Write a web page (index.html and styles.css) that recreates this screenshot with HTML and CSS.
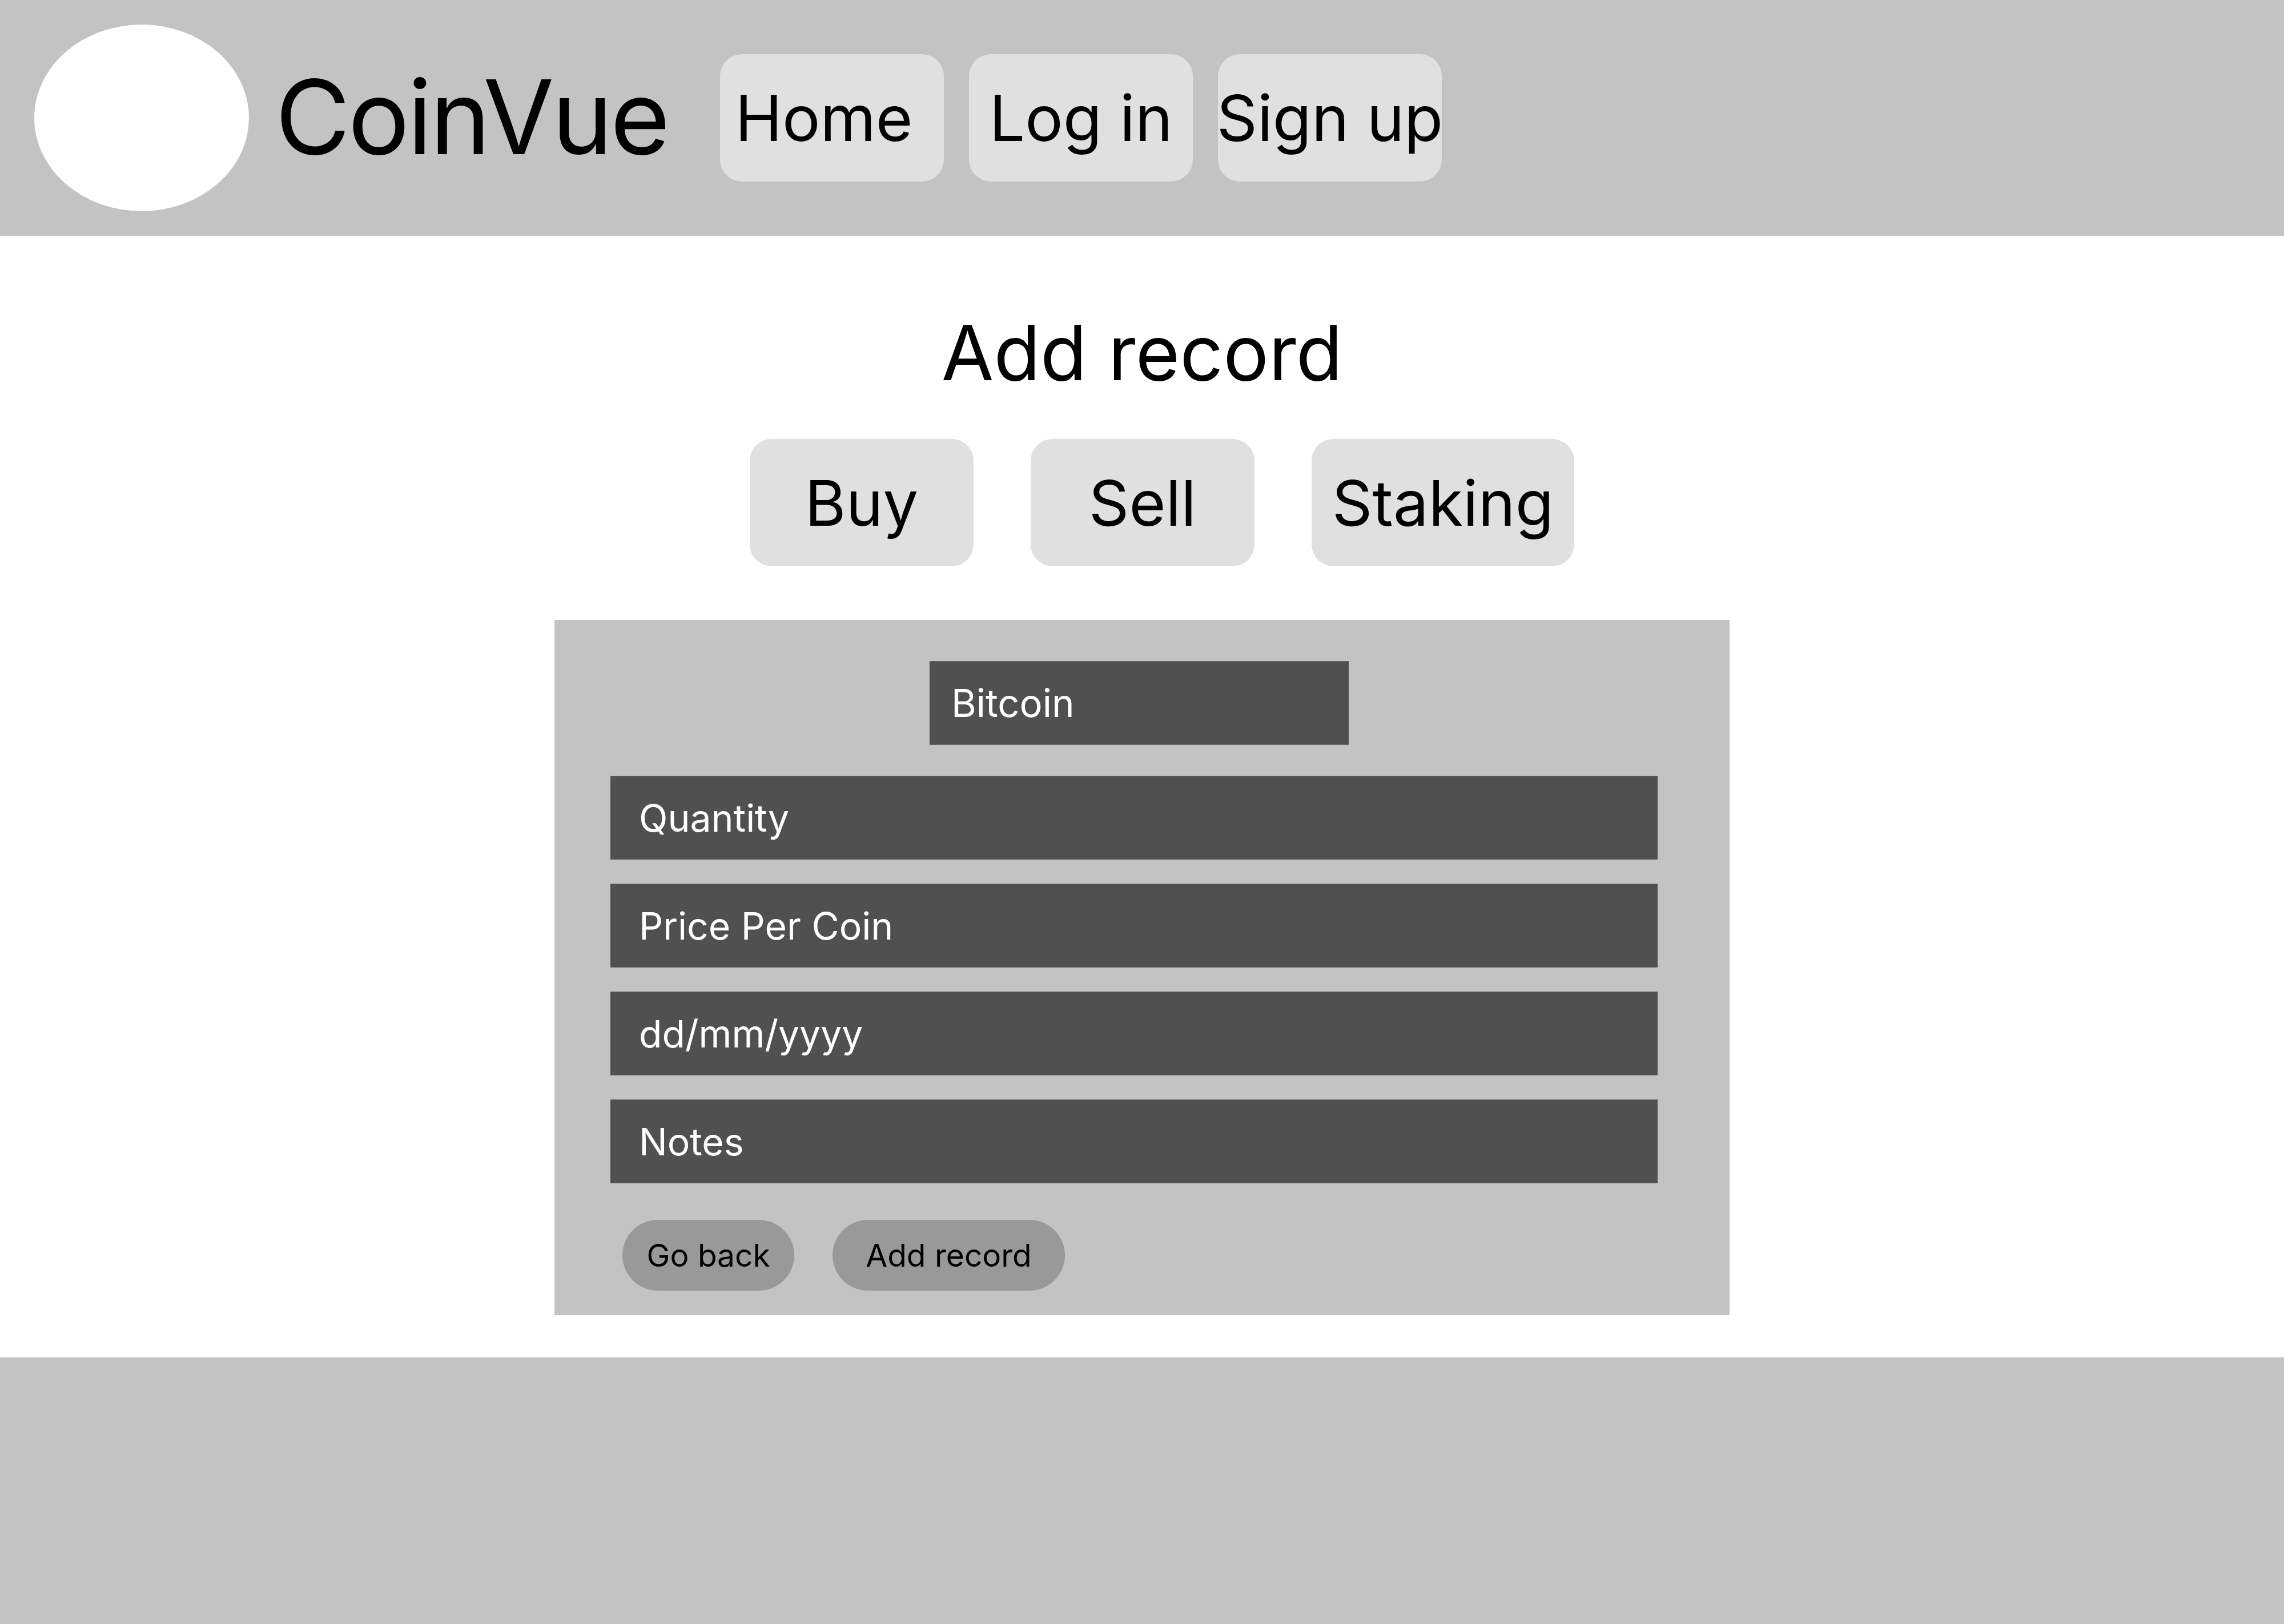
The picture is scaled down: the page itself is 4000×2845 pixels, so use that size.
FILE: index.html
```html
<!DOCTYPE html>
<html lang="en">
<head>
<meta charset="utf-8">
<title>CoinVue - Add record</title>
<link rel="stylesheet" href="styles.css">
</head>
<body>
<header class="topbar">
  <div class="logo"></div>
  <div class="brand">CoinVue</div>
  <nav class="nav">
    <a class="nav-btn nav-home" href="#">Home</a>
    <a class="nav-btn" href="#">Log in</a>
    <a class="nav-btn" href="#">Sign up</a>
  </nav>
</header>
<main class="main">
  <h1 class="title">Add record</h1>
  <div class="types">
    <button class="type-btn">Buy</button>
    <button class="type-btn">Sell</button>
    <button class="type-btn">Staking</button>
  </div>
  <form class="panel">
    <div class="coin">Bitcoin</div>
    <div class="fields">
      <div class="field">Quantity</div>
      <div class="field">Price Per Coin</div>
      <div class="field">dd/mm/yyyy</div>
      <div class="field">Notes</div>
    </div>
    <div class="actions">
      <button type="button" class="pill pill-back">Go back</button>
      <button type="button" class="pill pill-add">Add record</button>
    </div>
  </form>
</main>
<footer class="footer"></footer>
</body>
</html>
```

FILE: styles.css
```css
* { box-sizing: border-box; }
html, body { margin: 0; padding: 0; }
body {
  font-family: Inter, "Noto Sans", "Liberation Sans", sans-serif;
  background: #ffffff;
  color: #000;
  width: 4000px;
}

.topbar {
  height: 413px;
  background: #c3c3c3;
  display: flex;
  align-items: center;
  padding: 0 0 0 60px;
}
.logo {
  width: 376px;
  height: 327px;
  border-radius: 50%;
  background: #ffffff;
  flex: none;
}
.brand {
  margin-left: 46px;
  width: 779px;
  font-size: 180px;
  letter-spacing: -4px;
  line-height: 1;
  flex: none;
  padding-bottom: 4px;
}
.nav {
  display: flex;
  gap: 44px;
}
.nav-btn {
  width: 392px;
  height: 223px;
  border-radius: 38px;
  background: #e0e0e0;
  display: flex;
  align-items: center;
  justify-content: center;
  font-size: 111px;
  line-height: 1;
  color: #000;
  text-decoration: none;
  white-space: nowrap;
}
.nav-home { padding-right: 28px; }

.main {
  padding-top: 138px;
  padding-bottom: 74px;
}
.title {
  margin: 0;
  text-align: center;
  font-size: 133px;
  line-height: 1;
  font-weight: 400;
}
.types {
  margin-top: 85px;
  display: flex;
  justify-content: center;
  gap: 100px;
  padding-left: 70px;
}
.type-btn {
  min-width: 392px;
  height: 223px;
  padding: 0 36px;
  border: none;
  border-radius: 38px;
  background: #e0e0e0;
  font-family: inherit;
  font-size: 110px;
  line-height: 1;
  color: #000;
}

.panel {
  width: 2058px;
  margin: 94px auto 0;
  background: #c3c3c3;
  padding: 72px 0 43px;
  display: flex;
  flex-direction: column;
}
.coin {
  width: 734px;
  height: 147px;
  align-self: center;
  margin-left: -10px;
  background: #505050;
  border-top: 1px solid #6a6a6a;
  border-bottom: 1px solid #6a6a6a;
  color: #ffffff;
  font-size: 67px;
  line-height: 1;
  display: flex;
  align-items: center;
  padding-left: 38px;
}
.fields {
  margin-top: 54px;
  margin-left: 98px;
  display: flex;
  flex-direction: column;
  gap: 42px;
}
.field {
  width: 1834px;
  height: 147px;
  background: #505050;
  border-top: 1px solid #6a6a6a;
  border-bottom: 1px solid #6a6a6a;
  color: #ffffff;
  font-size: 66px;
  line-height: 1;
  display: flex;
  align-items: center;
  padding-left: 50px;
}
.actions {
  margin-top: 64px;
  margin-left: 119px;
  display: flex;
  gap: 67px;
}
.pill {
  height: 124px;
  border: none;
  border-radius: 62px;
  background: #999999;
  font-family: inherit;
  font-size: 55px;
  line-height: 1;
  color: #000;
  padding: 0;
}
.pill-back { width: 301px; }
.pill-add { width: 407px; }

.footer {
  height: 470px;
  background: #c3c3c3;
}
```
